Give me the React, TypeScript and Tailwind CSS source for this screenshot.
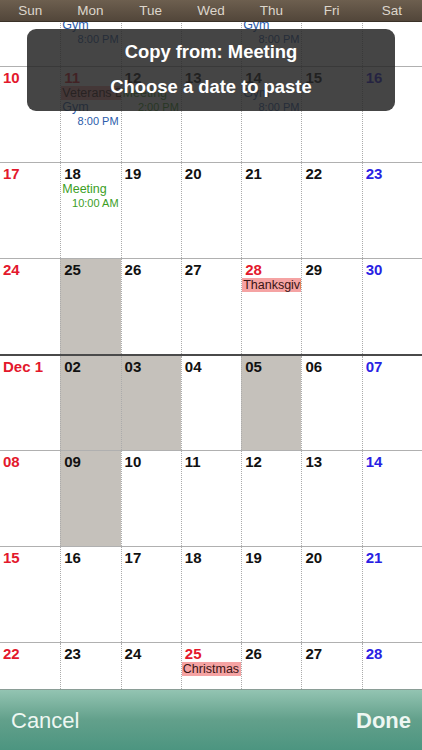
import React from 'react';

type Ev = { kind: 'holiday' | 'event'; title: string; time?: string; color?: string };
type Cell = { label: string; color?: string; gray?: boolean; events?: Ev[] };

const RED = 'text-[#e3182c]';
const BLUE = 'text-[#2a1fe3]';
const BLACK = 'text-[#111111]';

const gym: Ev = { kind: 'event', title: 'Gym', time: '8:00 PM', color: 'text-[#2b5cab]' };

const firstRow: Ev[][] = [[], [gym], [], [], [gym], [], []];

const weeks: Cell[][] = [
  [
    { label: '10', color: RED },
    { label: '11', color: RED, events: [{ kind: 'holiday', title: 'Veterans Day' }, gym] },
    { label: '12', events: [{ kind: 'event', title: 'Meeting', time: '2:00 PM', color: 'text-[#3c9e1f]' }] },
    { label: '13' },
    { label: '14', events: [gym] },
    { label: '15' },
    { label: '16', color: BLUE },
  ],
  [
    { label: '17', color: RED },
    { label: '18', events: [{ kind: 'event', title: 'Meeting', time: '10:00 AM', color: 'text-[#3c9e1f]' }] },
    { label: '19' },
    { label: '20' },
    { label: '21' },
    { label: '22' },
    { label: '23', color: BLUE },
  ],
  [
    { label: '24', color: RED },
    { label: '25', gray: true },
    { label: '26' },
    { label: '27' },
    { label: '28', color: RED, events: [{ kind: 'holiday', title: 'Thanksgiving' }] },
    { label: '29' },
    { label: '30', color: BLUE },
  ],
  [
    { label: 'Dec 1', color: RED },
    { label: '02', gray: true },
    { label: '03', gray: true },
    { label: '04' },
    { label: '05', gray: true },
    { label: '06' },
    { label: '07', color: BLUE },
  ],
  [
    { label: '08', color: RED },
    { label: '09', gray: true },
    { label: '10' },
    { label: '11' },
    { label: '12' },
    { label: '13' },
    { label: '14', color: BLUE },
  ],
  [
    { label: '15', color: RED },
    { label: '16' },
    { label: '17' },
    { label: '18' },
    { label: '19' },
    { label: '20' },
    { label: '21', color: BLUE },
  ],
  [
    { label: '22', color: RED },
    { label: '23' },
    { label: '24' },
    { label: '25', color: RED, events: [{ kind: 'holiday', title: 'Christmas' }] },
    { label: '26' },
    { label: '27' },
    { label: '28', color: BLUE },
  ],
];

function EventLines({ ev }: { ev: Ev }) {
  if (ev.kind === 'holiday') {
    return (
      <div className="mt-px h-[14px] overflow-hidden whitespace-nowrap bg-[#f5a3a3] pl-px text-[12.5px] leading-[14px] text-[#3a1414]">
        {ev.title}
      </div>
    );
  }
  return (
    <div className={ev.color}>
      <div className="h-[14px] overflow-hidden whitespace-nowrap pl-px text-[12.5px] leading-[14px]">{ev.title}</div>
      <div className="h-[14px] whitespace-nowrap pr-[2px] text-right text-[11px] leading-[14px]">{ev.time}</div>
    </div>
  );
}

export default function App() {
  const days = ['Sun', 'Mon', 'Tue', 'Wed', 'Thu', 'Fri', 'Sat'];

  return (
    <div
      className="relative flex h-[750px] w-[422px] flex-col overflow-hidden bg-white"
      style={{ fontFamily: '"Liberation Sans", Arial, sans-serif' }}
    >
      {/* Header */}
      <div className="grid h-[22px] shrink-0 grid-cols-7 border-b border-[#3a3127] bg-gradient-to-b from-[#6d5f4f] to-[#52463a]">
        {days.map((d) => (
          <div key={d} className="text-center text-[13.5px] leading-[21px] text-[#ddd6cc]">
            {d}
          </div>
        ))}
      </div>

      {/* Calendar */}
      <div className="flex min-h-0 flex-1 flex-col overflow-hidden">
        <div className="grid h-[44px] shrink-0 grid-cols-7 overflow-hidden">
          {firstRow.map((evs, i) => (
            <div key={i} className={`-mt-[4px] ${i > 0 ? 'border-l border-dotted border-[#ababab]' : ''}`}>
              {evs.map((ev, j) => (
                <EventLines key={j} ev={ev} />
              ))}
            </div>
          ))}
        </div>

        {weeks.map((week, wi) => (
          <div
            key={wi}
            className={`grid grid-cols-7 ${wi === weeks.length - 1 ? 'min-h-0 flex-1' : 'h-[96px] shrink-0'} ${
              wi === 3 ? 'border-t-2 border-[#4a4a4a]' : 'border-t-[1.5px] border-[#b0b0b0]'
            }`}
          >
            {week.map((cell, ci) => (
              <div
                key={ci}
                className={`overflow-hidden ${cell.gray ? 'bg-[#c5c1bb]' : ''} ${
                  ci > 0 ? 'border-l border-dotted border-[#ababab]' : ''
                }`}
              >
                <div className={`pl-[3px] pt-[3px] text-[15px] font-bold leading-[15px] ${cell.color ?? BLACK}`}>
                  {cell.label}
                </div>
                <div className="mt-[1px]">
                  {(cell.events ?? []).map((ev, j) => (
                    <EventLines key={j} ev={ev} />
                  ))}
                </div>
              </div>
            ))}
          </div>
        ))}
      </div>

      {/* Footer */}
      <div className="flex h-[61px] shrink-0 items-center justify-between border-t border-[#8a9d96] bg-gradient-to-b from-[#93c4b2] via-[#62a08b] to-[#4c9580] px-[11px]">
        <span className="text-[22px] text-[#eef7f2]">Cancel</span>
        <span className="text-[22px] font-bold text-[#eef7f2]">Done</span>
      </div>

      {/* Copy overlay */}
      <div className="absolute left-[27px] top-[29px] flex h-[82px] w-[368px] flex-col items-center justify-center gap-[13px] rounded-[9px] bg-[#252525]/85 pb-[2px] text-white">
        <div className="text-[18.4px] font-bold leading-[22px]">Copy from: Meeting</div>
        <div className="text-[18.4px] font-bold leading-[22px]">Choose a date to paste</div>
      </div>
    </div>
  );
}
